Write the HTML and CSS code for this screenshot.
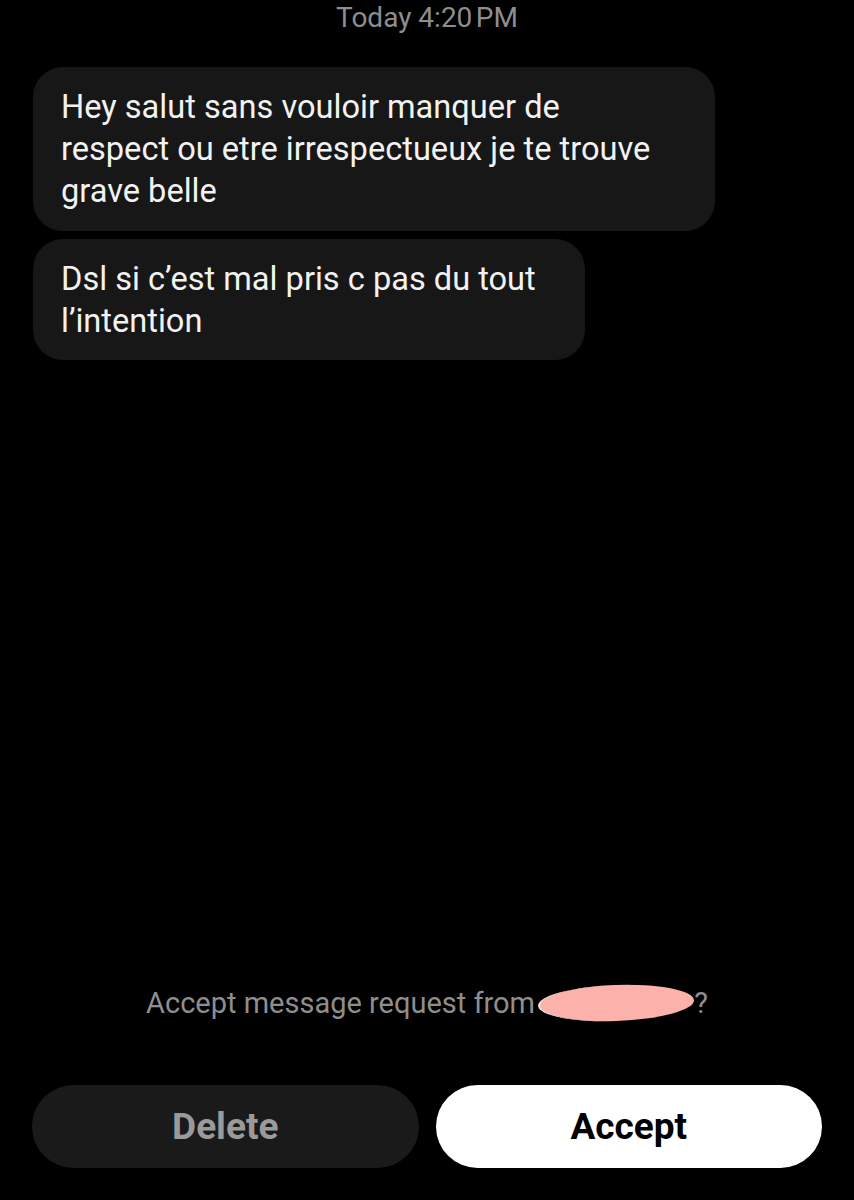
FILE: index.html
```html
<!DOCTYPE html>
<html lang="fr">
<head>
  <meta charset="UTF-8" />
  <meta name="viewport" content="width=device-width, initial-scale=1.0"/>
  <title>Message request</title>
  <link rel="stylesheet" href="styles.css">
</head>
<body>
  <div class="screen">
    <div class="timestamp">Today 4:20&#8201;PM</div>

    <div class="messages">
      <div class="bubble wide">Hey salut sans vouloir manquer de<br>respect ou etre irrespectueux je te trouve<br>grave belle</div>
      <div class="bubble narrow">Dsl si c’est mal pris c pas du tout<br>l’intention</div>
    </div>

    <div class="request">
      <p class="request-text">Accept message request from <span class="blob"></span>?</p>
      <div class="actions">
        <button class="btn delete">Delete</button>
        <button class="btn accept">Accept</button>
      </div>
    </div>
  </div>
</body>
</html>
```

FILE: styles.css
```css
:root {
  --bg: #000;
  --bubble: #171717;
  --muted: #8e8e8e;
  --text: #f2f2f2;
}

* {
  box-sizing: border-box;
}

body {
  margin: 0;
  background: var(--bg);
  color: var(--text);
  font-family: 'Roboto', 'Liberation Sans', sans-serif;
}

.screen {
  height: 1200px;
  display: flex;
  flex-direction: column;
  padding: 0 32px;
}

.timestamp {
  text-align: center;
  color: var(--muted);
  font-size: 28px;
  line-height: 36px;
}

.messages {
  display: flex;
  flex-direction: column;
  align-items: flex-start;
  gap: 8px;
  margin-top: 31px;
}

.bubble {
  background: var(--bubble);
  border-radius: 30px;
  padding: 19px 10px 19px 28px;
  font-size: 32.6px;
  line-height: 42px;
  color: var(--text);
  white-space: nowrap;
}

.bubble.wide {
  margin-left: 1px;
  width: 682px;
}

.bubble.narrow {
  margin-left: 1px;
  width: 552px;
  padding-bottom: 18px;
}

.request {
  margin-top: auto;
  padding-bottom: 32px;
}

.request-text {
  margin: 0 0 62px;
  text-align: center;
  color: var(--muted);
  font-size: 29px;
  line-height: 40px;
}

.blob {
  display: inline-block;
  width: 156px;
  height: 36px;
  margin-left: -4px;
  vertical-align: -8px;
  background: #fdb1ab;
  border-radius: 50%;
  border-left: 2px solid #eee;
  transform: rotate(-2deg);
}

.actions {
  display: flex;
  gap: 17px;
}

.btn {
  flex: 1;
  height: 83px;
  border: none;
  border-radius: 42px;
  font-family: inherit;
  font-size: 37px;
  font-weight: 700;
}

.delete {
  background: #1a1a1a;
  color: #9a9a9a;
}

.accept {
  background: #fff;
  color: #000;
}
```
